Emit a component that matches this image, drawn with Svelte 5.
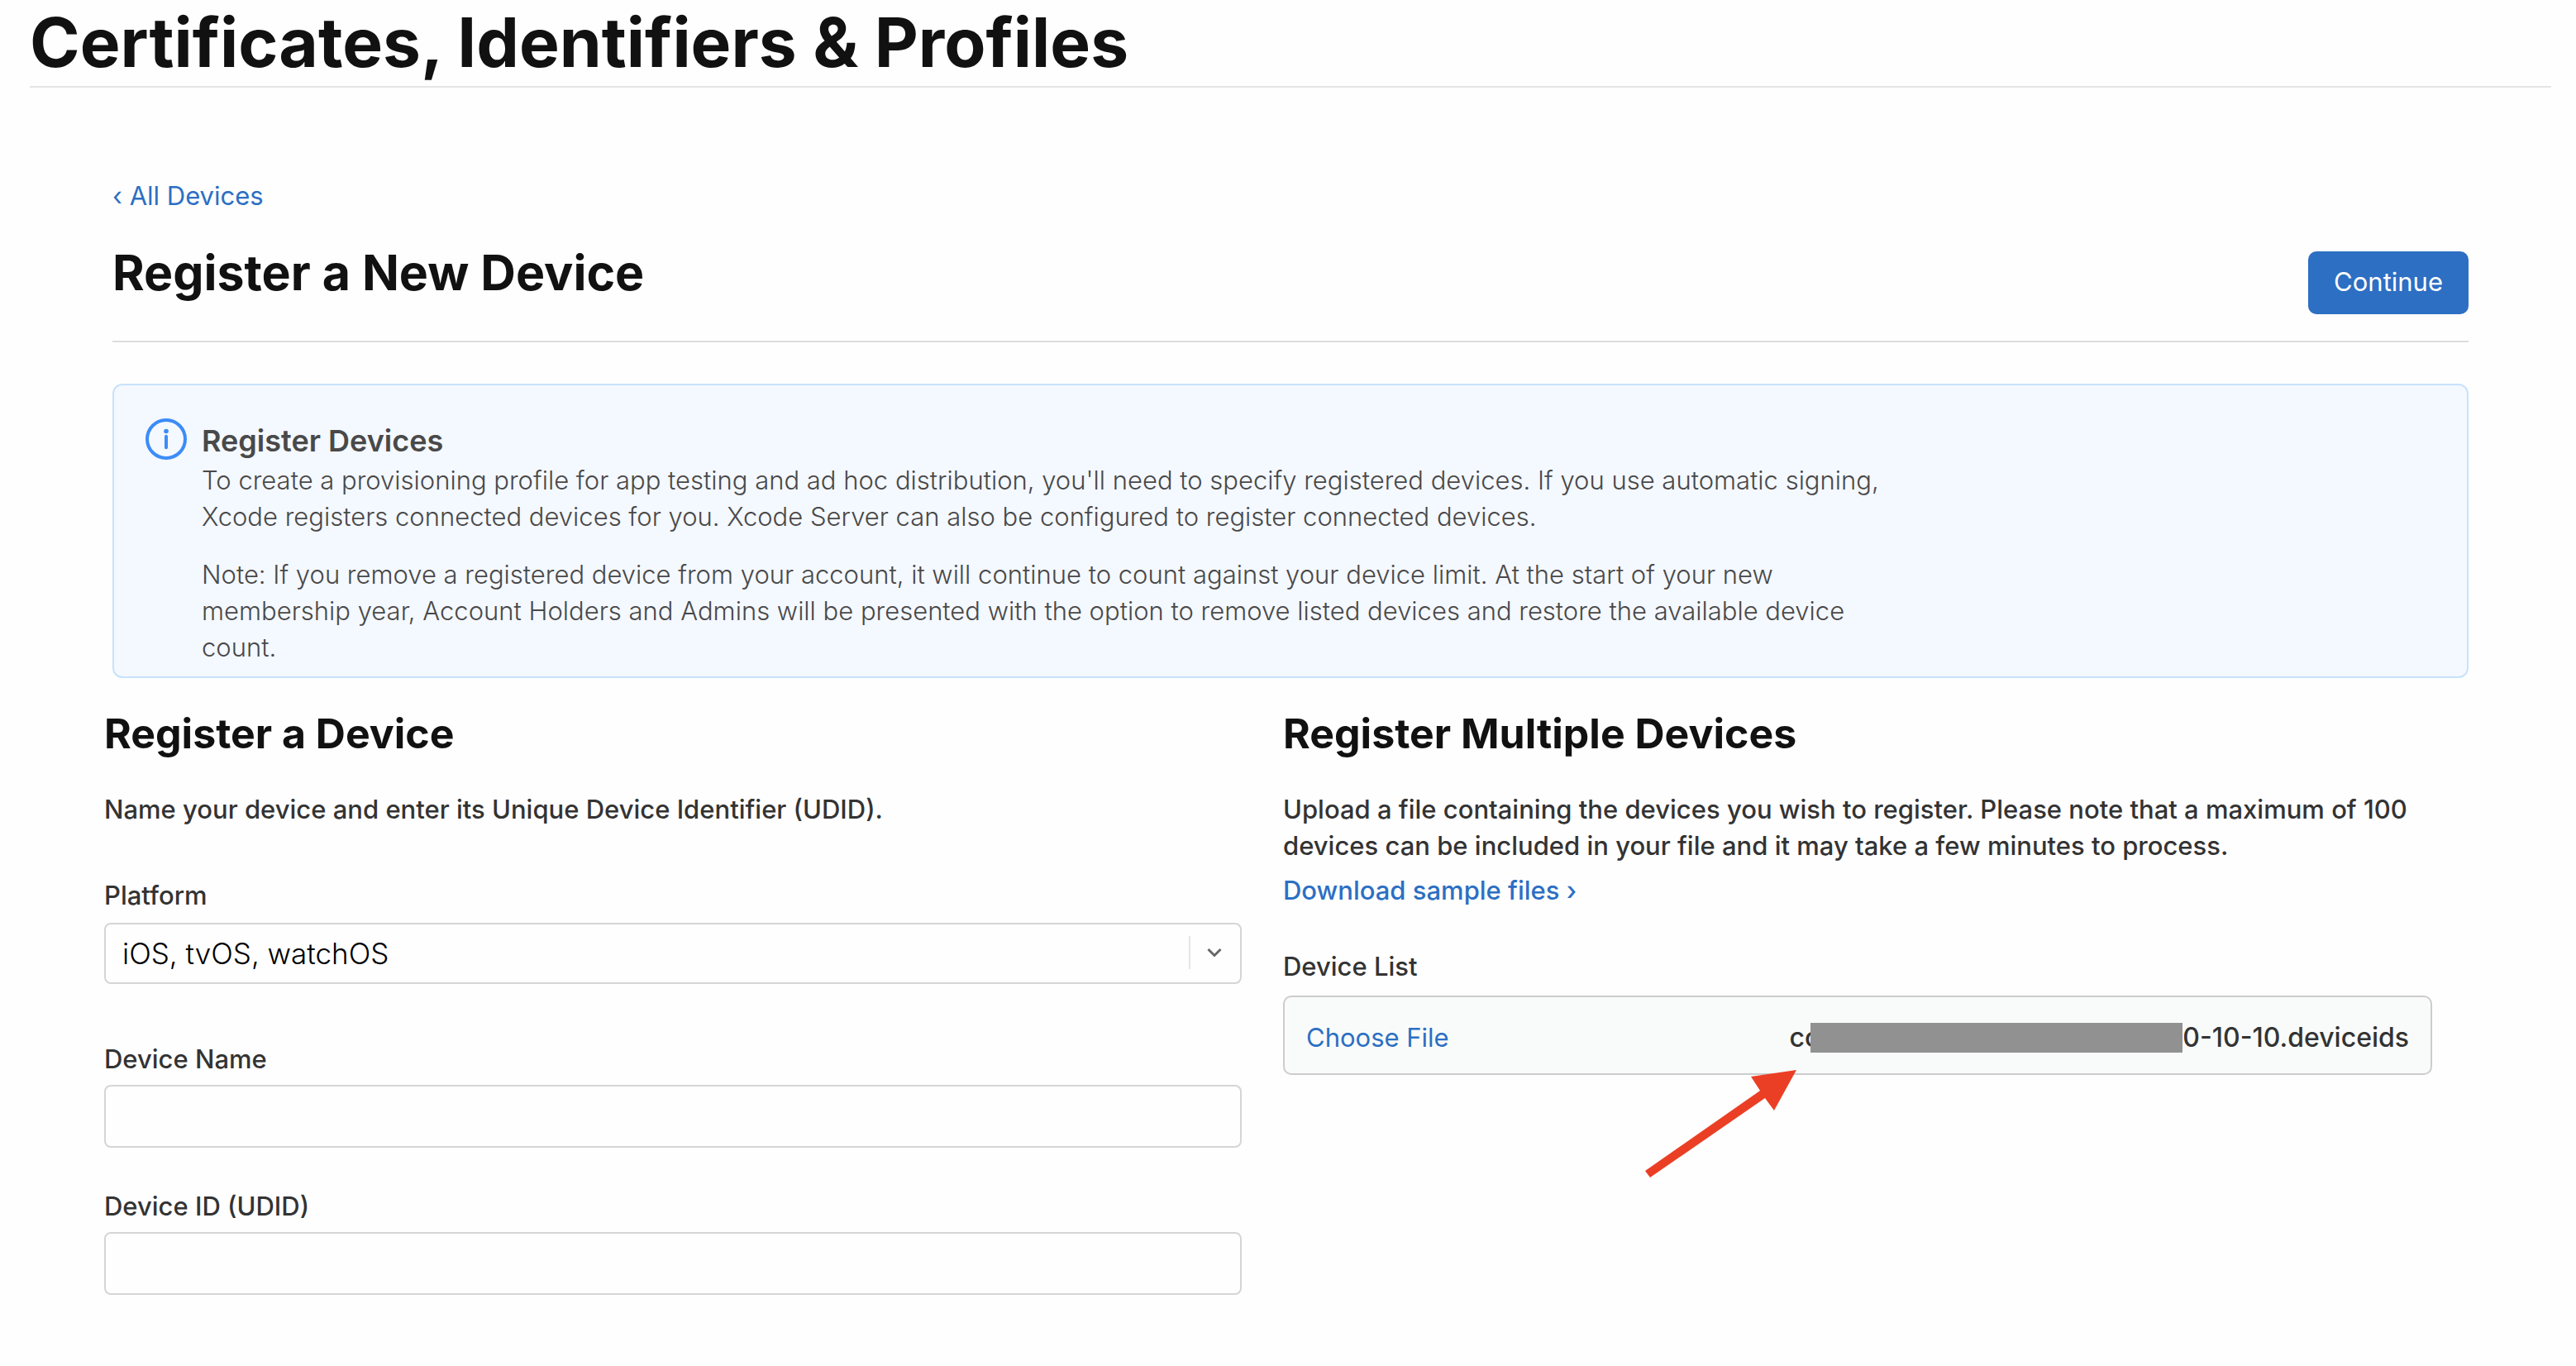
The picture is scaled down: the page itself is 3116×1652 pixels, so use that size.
<script>
  let platform = $state('ios');
  let deviceName = $state('');
  let udid = $state('');
</script>

<div class="page">
  <header class="masthead">
    <h1>Certificates, Identifiers &amp; Profiles</h1>
  </header>

  <main>
    <section class="intro">
      <a class="back" href="#devices">‹ All Devices</a>
      <div class="title-row">
        <h2>Register a New Device</h2>
        <button type="button" class="continue">Continue</button>
      </div>

      <aside class="info">
        <svg class="info-icon" viewBox="0 0 50 50" aria-hidden="true">
          <circle cx="25" cy="25" r="23" fill="none" stroke="currentColor" stroke-width="4" />
          <circle cx="25" cy="15.5" r="2.8" fill="currentColor" />
          <path d="M25 21.7V35.3" stroke="currentColor" stroke-width="4" stroke-linecap="round" />
        </svg>
        <div class="info-text">
          <h3>Register Devices</h3>
          <p>
            To create a provisioning profile for app testing and ad hoc distribution, you'll need to specify
            registered devices. If you use automatic signing, Xcode registers connected devices for you. Xcode
            Server can also be configured to register connected devices.
          </p>
          <p>
            Note: If you remove a registered device from your account, it will continue to count against your
            device limit. At the start of your new membership year, Account Holders and Admins will be presented
            with the option to remove listed devices and restore the available device count.
          </p>
        </div>
      </aside>
    </section>

    <div class="columns">
      <section class="single">
        <h3>Register a Device</h3>
        <p>Name your device and enter its Unique Device Identifier (UDID).</p>

        <div class="field platform">
          <label for="platform">Platform</label>
          <div class="select">
            <select id="platform" bind:value={platform}>
              <option value="ios">iOS, tvOS, watchOS</option>
              <option value="macos">macOS</option>
            </select>
            <svg class="chevron" viewBox="0 0 20 14" aria-hidden="true">
              <path d="M2.5 3L10 10.5L17.5 3" fill="none" stroke="currentColor" stroke-width="3" />
            </svg>
          </div>
        </div>

        <div class="field name">
          <label for="device-name">Device Name</label>
          <input id="device-name" type="text" bind:value={deviceName} />
        </div>

        <div class="field udid">
          <label for="device-id">Device ID (UDID)</label>
          <input id="device-id" type="text" bind:value={udid} />
        </div>
      </section>

      <section class="multiple">
        <h3>Register Multiple Devices</h3>
        <p>
          Upload a file containing the devices you wish to register. Please note that a maximum of 100 devices
          can be included in your file and it may take a few minutes to process.
        </p>
        <a class="download" href="#samples">Download sample files ›</a>

        <div class="field list">
          <label for="device-list">Device List</label>
          <div class="file-box">
            <label class="choose" for="device-list">Choose File</label>
            <input id="device-list" class="file-input" type="file" />
            <div class="filename">
              <span>co</span>
              <i class="redaction"></i>
              <span>0-10-10.deviceids</span>
              <svg class="arrow" viewBox="0 0 188 136" aria-hidden="true">
                <path d="M185 2L130 10L141 27L2 124L8 132L147 36L158 51Z" fill="#eb3f25" />
              </svg>
            </div>
          </div>
        </div>
      </section>
    </div>
  </main>
</div>

<style>
  :global(body) {
    background: #fefefe;
  }

  .page {
    padding: 0 30px 80px 36px;
    font-family: Inter, 'Liberation Sans', sans-serif;
    font-size: 31px;
    line-height: 44px;
    color: #333;
  }

  h1,
  h2,
  h3,
  p {
    margin: 0;
  }

  h1,
  h2,
  h3 {
    font-weight: 700;
    color: #111;
  }

  a {
    color: #2c6fc3;
    text-decoration: none;
  }

  .masthead {
    border-bottom: 2px solid #e5e5e5;
  }

  h1 {
    font-size: 82px;
    line-height: 104px;
  }

  .intro {
    margin: 0 100px;
    padding-top: 109px;
  }

  .back {
    display: block;
  }

  .title-row {
    display: flex;
    justify-content: space-between;
    align-items: flex-start;
    margin-top: 35px;
    padding-bottom: 32px;
    border-bottom: 2px solid #ddd;
  }

  h2 {
    font-size: 59px;
    line-height: 72px;
  }

  .continue {
    height: 76px;
    margin-top: 10px;
    padding: 0 31px 2px;
    border: 0;
    border-radius: 10px;
    background: #2c6fc3;
    color: #fff;
    font: inherit;
  }

  .info {
    display: flex;
    gap: 18px;
    margin-top: 50px;
    padding: 40px 38px 13px;
    border: 2px solid #c7e2fc;
    border-radius: 12px;
    background: #f4f8ff;
    color: #494949;
    font-weight: 300;
  }

  .info-icon {
    flex: none;
    width: 50px;
    height: 50px;
    color: #3c8cf7;
  }

  .info-text {
    max-width: 2040px;
    padding-top: 4px;
  }

  .info h3 {
    margin-bottom: 3px;
    font-size: 36px;
    font-weight: 600;
    line-height: 46px;
    color: #494949;
  }

  .info p + p {
    margin-top: 26px;
  }

  .columns {
    display: grid;
    grid-template-columns: 1fr 1fr;
    margin: 0 108px 0 90px;
    padding-top: 38px;
    font-weight: 500;
  }

  .single {
    padding-right: 50px;
  }

  .multiple {
    padding-right: 36px;
  }

  .columns h3 {
    margin-bottom: 41px;
    font-size: 50px;
    line-height: 58px;
  }

  .field {
    display: flex;
    flex-direction: column;
    gap: 9px;
  }

  .platform {
    gap: 11px;
    margin-top: 60px;
  }

  .name {
    margin-top: 69px;
  }

  .udid {
    margin-top: 49px;
  }

  .list {
    gap: 13px;
    margin-top: 48px;
  }

  select,
  input[type='text'] {
    box-sizing: border-box;
    width: 100%;
    border: 2px solid #d5d5d5;
    border-radius: 8px;
    background: #fefefe;
    color: #000;
    font-family: inherit;
    font-size: 35px;
    font-weight: 300;
  }

  input[type='text'] {
    height: 76px;
    padding: 0 20px;
  }

  .select {
    display: flex;
    position: relative;
  }

  select {
    height: 74px;
    padding: 0 80px 0 20px;
    appearance: none;
  }

  .chevron {
    position: absolute;
    top: 16px;
    right: 0;
    width: 20px;
    height: 14px;
    padding: 13px 23px 13px 19px;
    border-left: 2px solid #e5e5e5;
    color: #666;
    pointer-events: none;
  }

  .download {
    display: block;
    margin-top: 10px;
  }

  .file-box {
    display: flex;
    justify-content: space-between;
    padding: 27px 26px 21px;
    border: 2px solid #ccc;
    border-radius: 10px;
    background: #f9fbfa;
  }

  .choose {
    color: #2c6fc3;
    font-weight: 400;
  }

  .file-input {
    position: absolute;
    width: 1px;
    height: 1px;
    opacity: 0;
  }

  .filename {
    display: flex;
    align-items: center;
    position: relative;
    font-size: 32px;
  }

  .redaction {
    width: 450px;
    height: 36px;
    margin-left: -12px;
    background: #919191;
  }

  .arrow {
    position: absolute;
    top: 59px;
    right: 738px;
    width: 188px;
    height: 136px;
  }
</style>
